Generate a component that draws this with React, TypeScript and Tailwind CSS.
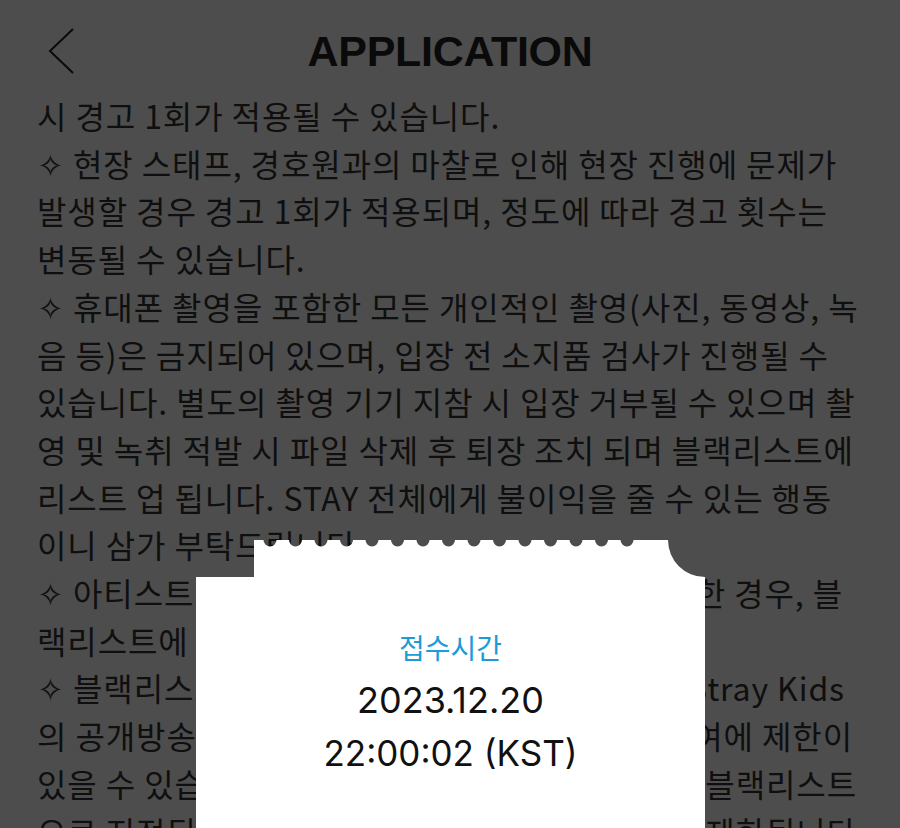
import React from "react";

const fullLines: string[] = [
  "시 경고 1회가 적용될 수 있습니다.",
  "✧ 현장 스태프, 경호원과의 마찰로 인해 현장 진행에 문제가",
  "발생할 경우 경고 1회가 적용되며, 정도에 따라 경고 횟수는",
  "변동될 수 있습니다.",
  "✧ 휴대폰 촬영을 포함한 모든 개인적인 촬영(사진, 동영상, 녹",
  "음 등)은 금지되어 있으며, 입장 전 소지품 검사가 진행될 수",
  "있습니다. 별도의 촬영 기기 지참 시 입장 거부될 수 있으며 촬",
  "영 및 녹취 적발 시 파일 삭제 후 퇴장 조치 되며 블랙리스트에",
  "리스트 업 됩니다. STAY 전체에게 불이익을 줄 수 있는 행동",
  "이니 삼가 부탁드립니다.",
];

const splitLines: { left: string; right: string; end: number }[] = [
  { left: "✧ 아티스트에게 불쾌감을", right: "한 경우, 블", end: 843 },
  { left: "랙리스트에 등록될 수 있습니다.", right: "", end: 843 },
  { left: "✧ 블랙리스트에 등록된", right: "Stray Kids", end: 845 },
  { left: "의 공개방송 및 오프라인", right: "여에 제한이", end: 853 },
  { left: "있을 수 있습니다. 추후", right: "블랙리스트", end: 857 },
  { left: "으로 지정된 경우 모든", right: "등 제한됩니다", end: 857 },
];

function TicketShape() {
  const r = 6.5;
  let d = "M58,0 ";
  for (let i = 0; i < 15; i++) {
    const c = 74 + i * 25.5;
    d += `L${c - r},0 A${r},${r} 0 0 0 ${c + r},0 `;
  }
  d += "L472,0 A37,37 0 0 0 509,37 L509,288 L0,288 L0,37 L58,37 Z";
  return (
    <svg className="absolute inset-0" width="509" height="288" viewBox="0 0 509 288">
      <path d={d} fill="#ffffff" />
    </svg>
  );
}

export default function App() {
  return (
    <div
      className="relative w-[900px] h-[828px] overflow-hidden bg-[#4d4d4d]"
      style={{ fontFamily: '"Noto Sans CJK KR", "Noto Sans", sans-serif' }}
    >
      <header className="relative flex h-[92px] justify-center pt-[30px]">
        <svg
          className="absolute left-[46px] top-[26px]"
          width="30"
          height="50"
          viewBox="0 0 30 50"
        >
          <path d="M27,3 L4,25 L27,47" fill="none" stroke="#0a0a0a" strokeWidth="2" />
        </svg>
        <h1
          className="text-[43px] leading-none font-bold text-[#0a0a0a] tracking-[-0.3px]"
          style={{ fontFamily: '"Liberation Sans", Arial, sans-serif' }}
        >
          APPLICATION
        </h1>
      </header>

      <div className="px-[37px] text-[32px] leading-[47.7px] text-[#0f0f0f] tracking-[0.9px]">
        {fullLines.map((l, i) => (
          <div key={i} className="whitespace-nowrap">
            {l}
          </div>
        ))}
        {splitLines.map((s, i) => (
          <div key={"s" + i} className="relative flex whitespace-nowrap">
            <span>{s.left}</span>
            <span className="flex-1" />
            <span style={{ marginRight: 863 - s.end }}>{s.right}</span>
          </div>
        ))}
      </div>

      <div className="absolute left-[196px] top-[540px] w-[509px] h-[288px]">
        <TicketShape />
        <div className="relative flex flex-col items-center pt-[88px]">
          <div className="text-[28px] leading-[38px] text-[#1b9bd7]">접수시간</div>
          <div
            className="mt-[9px] text-[36px] leading-[50px] text-[#111]"
            style={{ fontFamily: 'Inter, "Liberation Sans", sans-serif' }}
          >
            2023.12.20
          </div>
          <div
            className="mt-[3px] text-[35px] leading-[50px] text-[#111]"
            style={{ fontFamily: 'Inter, "Liberation Sans", sans-serif' }}
          >
            22:00:02 (KST)
          </div>
        </div>
      </div>
    </div>
  );
}
